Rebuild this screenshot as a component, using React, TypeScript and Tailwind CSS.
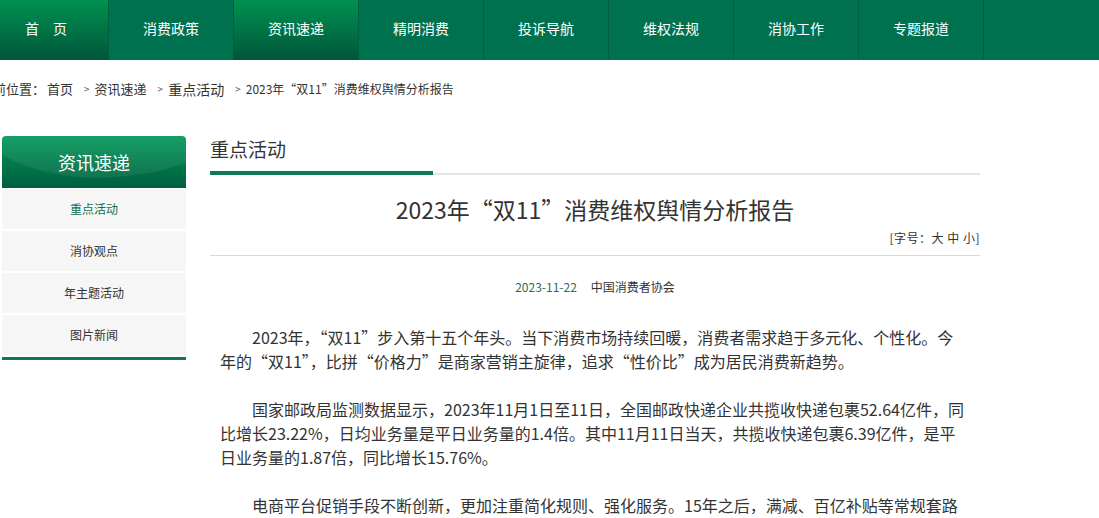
import React from 'react';

const navItems = ['首　页', '消费政策', '资讯速递', '精明消费', '投诉导航', '维权法规', '消协工作', '专题报道'];
const sideItems = ['重点活动', '消协观点', '年主题活动', '图片新闻'];

const paragraphs = [
    '2023年，“双11”步入第十五个年头。当下消费市场持续回暖，消费者需求趋于多元化、个性化。今年的“双11”，比拼“价格力”是商家营销主旋律，追求“性价比”成为居民消费新趋势。',
    '国家邮政局监测数据显示，2023年11月1日至11日，全国邮政快递企业共揽收快递包裹52.64亿件，同比增长23.22%，日均业务量是平日业务量的1.4倍。其中11月11日当天，共揽收快递包裹6.39亿件，是平日业务量的1.87倍，同比增长15.76%。',
    '电商平台促销手段不断创新，更加注重简化规则、强化服务。15年之后，满减、百亿补贴等常规套路依然存在，但消费者对促销的理性认识不断增强。',
];

const Crumb = ({ children, size }: { children: React.ReactNode; size: string }) => (
    <>
        <span className="ml-[11px] mr-[5px] text-[10px] text-[#555]">&gt;</span>
        <span className={size}>{children}</span>
    </>
);

export default function App() {
    return (
        <div className="w-[1099px] h-[518px] overflow-hidden bg-white font-['Noto_Sans_CJK_SC','Noto_Sans',sans-serif] text-[#333]">
            {/* Top navigation */}
            <div className="h-[60px] bg-[#00714f]">
                <div className="-ml-4 flex h-full">
                    {navItems.map((item, i) => {
                        const hot = i === 0 || i === 2;
                        return (
                            <div
                                key={item}
                                className={`flex h-full w-[125px] shrink-0 items-center justify-center border-r border-[#00603f] pb-[4px] text-[14px] text-white ${hot ? 'bg-gradient-to-b from-[#019150] to-[#00573a]' : ''}`}
                            >
                                {item}
                            </div>
                        );
                    })}
                </div>
            </div>

            <div className="-ml-[14px] w-[1000px]">
                {/* Breadcrumb */}
                <div className="-ml-[6px] mt-[20px] flex h-[18px] items-center text-[13px] leading-[18px] whitespace-nowrap">
                    <span>当前位置：</span>
                    <span className="ml-[2px]">首页</span>
                    <Crumb size="text-[13px]">资讯速递</Crumb>
                    <Crumb size="text-[14px]">重点活动</Crumb>
                    <Crumb size="text-[12px]">2023年“双11”消费维权舆情分析报告</Crumb>
                </div>

                <div className="mt-[38px] flex pl-[16px]">
                    {/* Sidebar */}
                    <div className="w-[184px] shrink-0">
                        <div className="relative flex h-[52px] items-center justify-center overflow-hidden rounded-t-[4px] bg-gradient-to-b from-[#03985a] to-[#005e3d]">
                            <div className="absolute -left-[40px] -top-[150px] h-[190px] w-[320px] rotate-[-8deg] rounded-[50%] bg-white/[0.07]" />
                            <span className="relative text-[18px] text-white">资讯速递</span>
                        </div>
                        <div className="flex flex-col gap-[2px] pt-px">
                            {sideItems.map((item, i) => (
                                <div
                                    key={item}
                                    className={`flex h-[40px] items-center justify-center bg-[#f6f6f6] pb-px text-[12px] ${i === 0 ? 'text-[#13704f]' : 'text-[#333]'}`}
                                >
                                    {item}
                                </div>
                            ))}
                        </div>
                        <div className="mt-[2px] h-[3px] bg-[#127555]" />
                    </div>

                    {/* Main */}
                    <div className="ml-[24px] w-[770px]">
                        <div className="h-[26px] text-[19px] leading-[26px]">重点活动</div>
                        <div className="mt-[9px] flex items-end">
                            <div className="h-[4px] w-[223px] bg-[#10795a]" />
                            <div className="h-[2px] flex-1 bg-[#e4e4e4]" />
                        </div>

                        <h1 className="mt-[19px] text-center text-[23px] leading-[30px]">2023年“双11”消费维权舆情分析报告</h1>
                        <div className="mt-[5px] text-right text-[12px] leading-[18px] tracking-[0.5px]">[字号：大 中 小]</div>
                        <div className="mt-[8px] h-px bg-[#d8d8d8]" />

                        <div className="mt-[22px] text-center text-[12px] leading-[18px]">
                            <span className="text-[#2e6b58]">2023-11-22</span>
                            <span className="ml-[14px]">中国消费者协会</span>
                        </div>

                        <div className="mt-[29px] pl-[10px] pr-[14px] text-[16px] leading-[24px]">
                            {paragraphs.map((p, i) => (
                                <p key={i} className="mb-[24px] indent-[32px]">
                                    {p}
                                </p>
                            ))}
                        </div>
                    </div>
                </div>
            </div>
        </div>
    );
}
